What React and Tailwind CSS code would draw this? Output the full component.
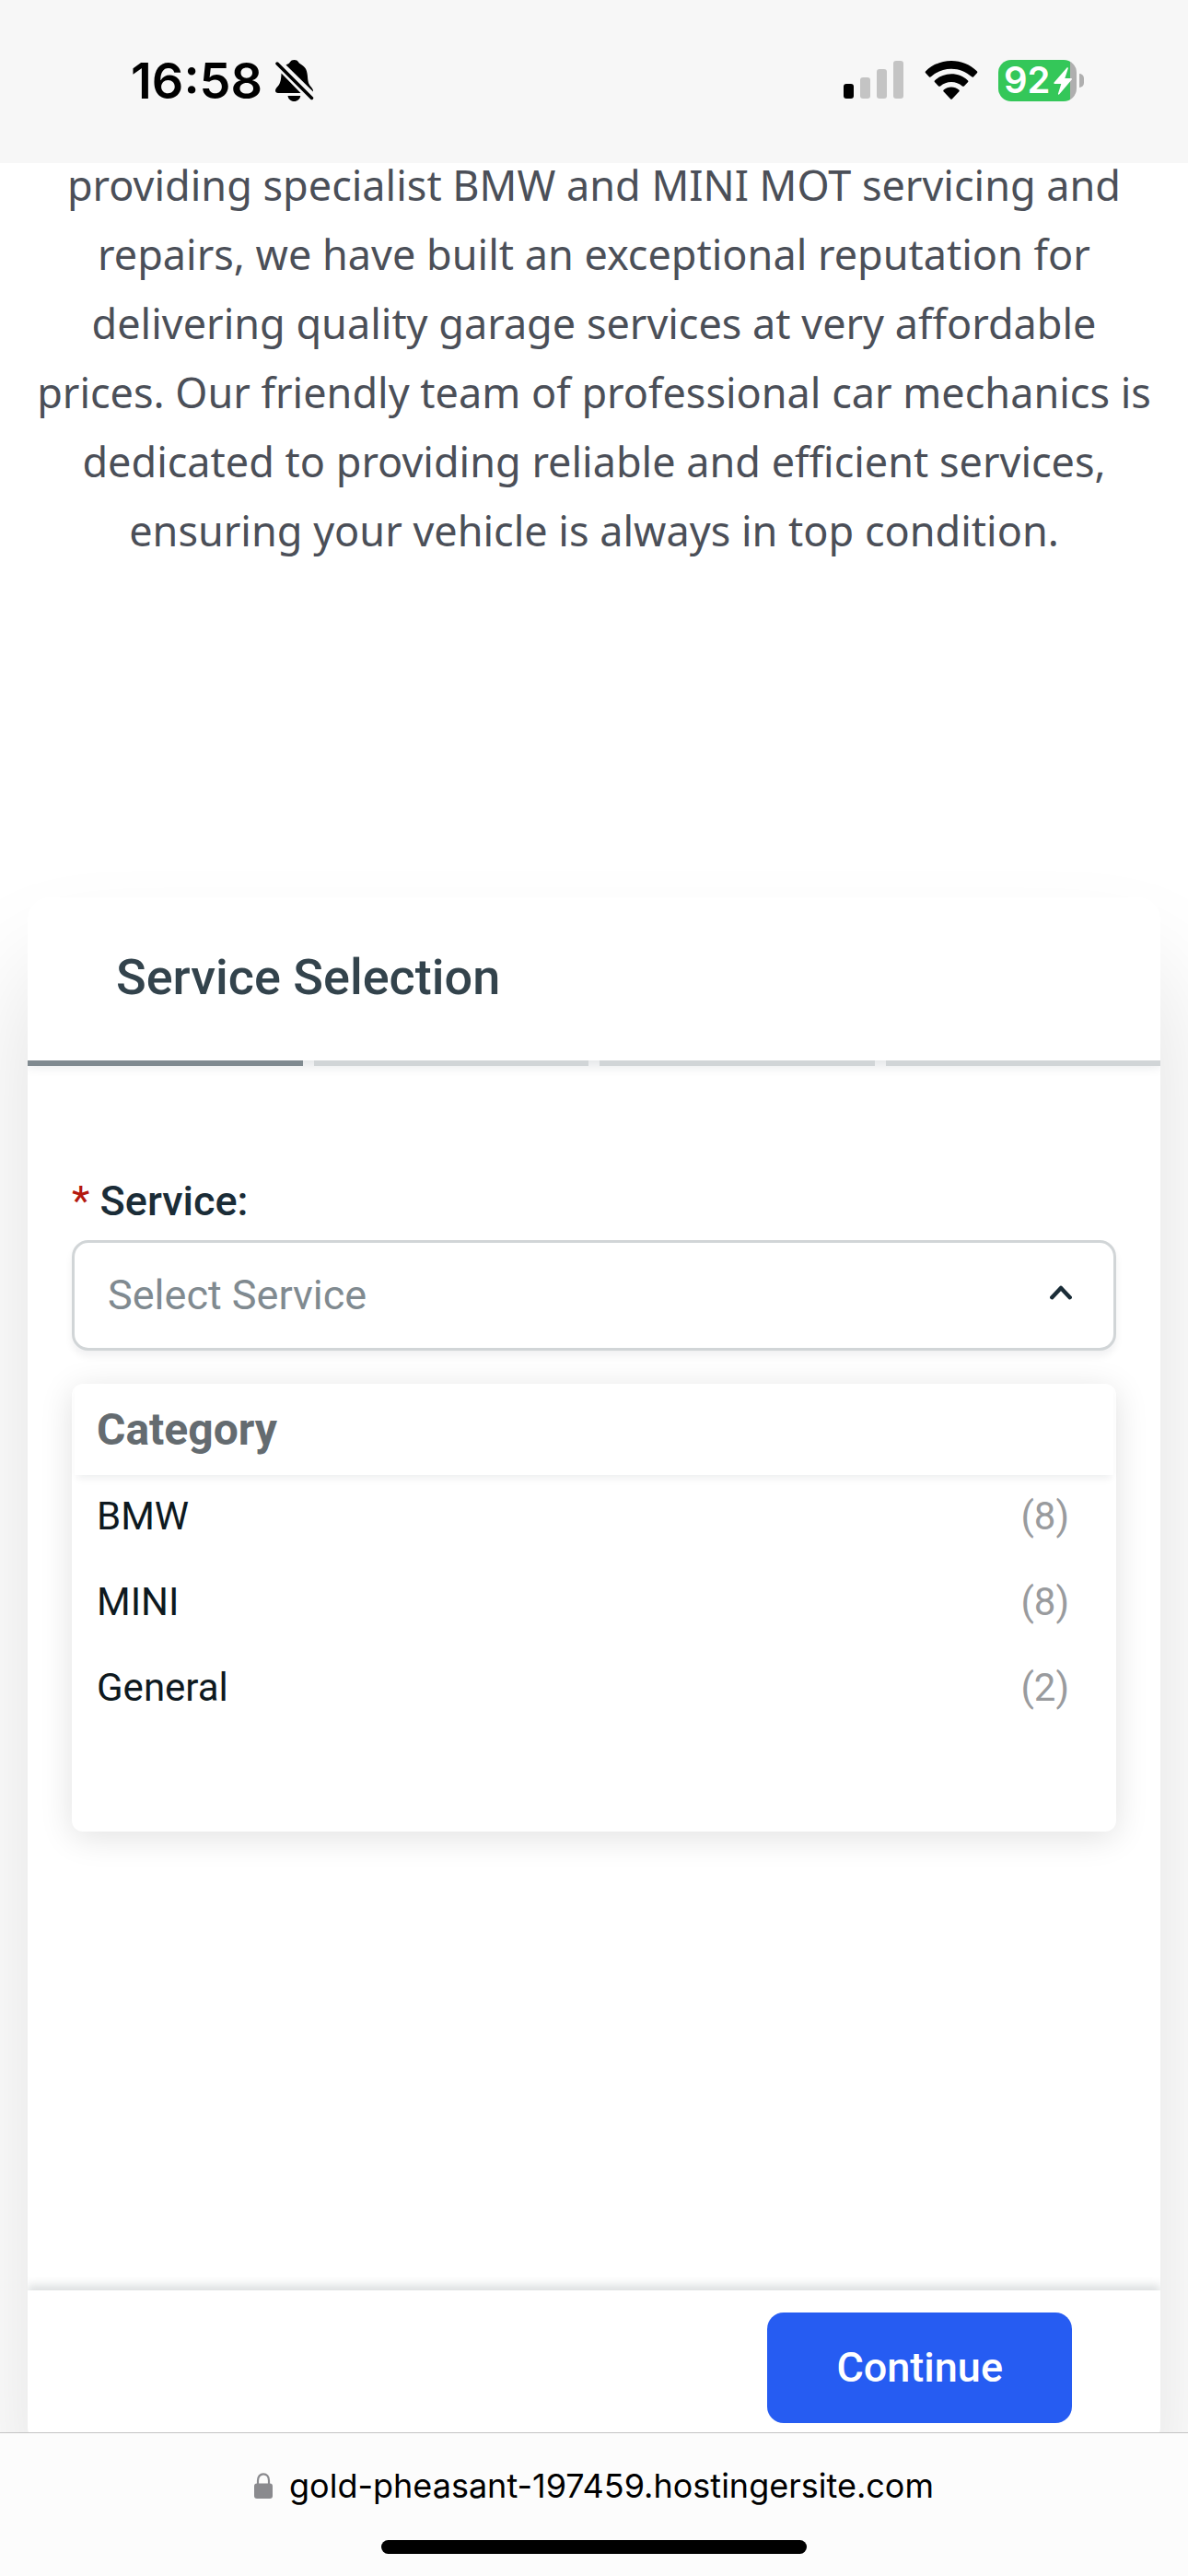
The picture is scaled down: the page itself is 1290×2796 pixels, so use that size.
import React, { useState } from "react";

const STEPS = ["service", "date", "details", "payment"];

const CATEGORIES = [
  { id: 1, name: "BMW", count: 8 },
  { id: 2, name: "MINI", count: 8 },
  { id: 3, name: "General", count: 2 },
];

function BellOffIcon() {
  return (
    <svg viewBox="0 0 42 46" className="h-[46px] w-[42px]" fill="none">
      <path
        fill="#000"
        d="M11.5 5.5C13.5 4.6 15 4 15.8 2.6C16.8 .8 18.4 0 20.5 0s3.7.8 4.7 2.6c.7 1.4 2 1.800 3.600 2.900C33.500 8.600 34.600 12.500 35 18c.3 5.500 1 8 3.500 11C40 30.700 41 32 41 34v.6zM6.500 14.500L27.500 36H3C1.200 36 0 35 0 33.500c0-2 1.200-3.200 2.800-5C5.800 25 6.200 20.500 6.500 14.500zM13.500 39h13.800c-.5 3.600-3.300 6-6.900 6s-6.400-2.400-6.900-6z"
      />
      <path d="M2 4l37.500 37.500" stroke="#000" strokeWidth="3.500" strokeLinecap="round" />
    </svg>
  );
}

function SignalIcon() {
  return (
    <svg viewBox="0 0 66 42" className="h-[42px] w-[66px]">
      <rect x="0" y="25" width="11" height="16" rx="3" fill="#000" />
      <rect x="18" y="18" width="11" height="23" rx="3" fill="#c4c4c4" />
      <rect x="36" y="9" width="11" height="32" rx="3" fill="#c4c4c4" />
      <rect x="54" y="0" width="11" height="41" rx="3" fill="#c4c4c4" />
    </svg>
  );
}

function WifiIcon() {
  return (
    <svg viewBox="0 0 58 42" className="h-[42px] w-[58px]" fill="#000">
      <path d="M29 0C40 0 49.500 4.200 56.800 11.200c.7.700.7 1.400.1 2.100l-3.700 3.900c-.7.700-1.400.7-2.100.1C45 11.800 37.500 8.700 29 8.700S13 11.800 6.900 17.300c-.7.600-1.400.6-2.100-.1L1.100 13.300c-.6-.7-.6-1.400.1-2.100C8.500 4.200 18 0 29 0z" />
      <path d="M29 14.300c7 0 13 2.600 17.800 6.900.8.700.8 1.400.1 2.100l-4 4.100c-.6.600-1.300.6-2 .1C37.600 24.700 33.500 23 29 23s-8.600 1.700-11.900 4.500c-.7.500-1.400.5-2-.1l-4-4.100c-.7-.7-.7-1.400.1-2.100C16 16.900 22 14.300 29 14.300z" />
      <path d="M29 28.500c3.100 0 5.900 1.100 8.200 2.900.7.600.7 1.300.1 2L30 41.200c-.7.700-1.300.7-2 0l-7.300-7.800c-.6-.7-.6-1.400.1-2C23.100 29.600 25.900 28.500 29 28.500z" />
    </svg>
  );
}

function Battery({ level }) {
  return (
    <div className="flex items-center gap-[3px]">
      <div className="relative flex h-[45px] w-[85px] items-center rounded-[14px] bg-[linear-gradient(90deg,#34c759_92%,#afafaf_92%)] pb-px pl-1.5">
        <span className="text-[40px] leading-[44px] font-semibold text-white">{level}</span>
        <svg viewBox="0 0 20 30" className="absolute top-2 right-[5px] h-[30px] w-5" fill="#fff">
          <path d="M14.500.600c.800-.900 1.700-.400 1.300.7L12.300 12H19c1 0 1.300.800.700 1.500L6.300 29.300c-.8.900-1.700.4-1.300-.7L8.300 18H1.300C.300 18 0 17.200.600 16.500z" />
        </svg>
      </div>
      <div className="h-[15px] w-[5px] rounded-r-full bg-[#afafaf]" />
    </div>
  );
}

function StatusBar() {
  return (
    <header className="relative z-10 flex h-[177px] shrink-0 items-start justify-between bg-[#f7f7f7] pt-[60px] pr-[113px] pl-[142px] font-['Inter',sans-serif]">
      <div className="flex h-14 items-center gap-[14px]">
        <span className="text-[54px] leading-[54px] font-semibold text-black">16:58</span>
        <BellOffIcon />
      </div>
      <div className="flex h-[54px] items-center gap-[22px]">
        <SignalIcon />
        <WifiIcon />
        <Battery level={92} />
      </div>
    </header>
  );
}

function ServiceForm() {
  const [service, setService] = useState("");

  return (
    <section className="mx-[30px] mt-[361px] overflow-hidden rounded-3xl bg-white font-['Roboto',sans-serif] shadow-[0_80px_120px_rgba(0,0,0,0.13)]">
      <h2 className="px-24 pt-[51px] pb-[54px] text-[54px] leading-[72px] font-medium text-[#33434c] shadow-[0_6px_12px_rgba(26,44,55,0.12)]">
        Service Selection
      </h2>
      <div className="grid grid-cols-4 gap-3">
        {STEPS.map((step, i) => (
          <div key={step} className={i === 0 ? "h-1.5 bg-[#808a90]" : "h-1.5 bg-[#d1d5d7]"} />
        ))}
      </div>

      <div className="px-12 pt-[117px] pb-[498px]">
        <label htmlFor="service" className="block text-[45px] leading-[60px] font-medium text-[#1a2c37]">
          <span className="font-normal text-[#b4190f]">*</span> Service:
        </label>
        <div className="relative mt-3">
          <select
            id="service"
            value={service}
            onChange={(e) => setService(e.target.value)}
            className="block h-[120px] w-full appearance-none rounded-[18px] border-3 border-[#d1d5d7] bg-white px-9 text-[45px] text-[#808a90] shadow-[0_6px_9px_rgba(14,25,32,0.06)]"
          >
            <option value="">Select Service</option>
            {CATEGORIES.map((c) => (
              <option key={c.id} value={c.name}>
                {c.name}
              </option>
            ))}
          </select>
          <svg
            viewBox="0 0 24 16"
            className="pointer-events-none absolute top-[49px] right-12 h-4 w-6"
            fill="none"
            stroke="#1a2c37"
            strokeWidth="4.500"
            strokeLinecap="round"
            strokeLinejoin="round"
          >
            <path d="M2.300 13.200L12 3l9.700 10.200" />
          </svg>
        </div>

        <div className="mt-9 rounded-xl bg-white pb-[108px] shadow-[0_6px_36px_rgba(0,0,0,0.12)]">
          <h3 className="mx-[3px] px-6 pt-5 pb-[19px] text-[48px] leading-[60px] font-bold text-[#646b70] shadow-[0_6px_9px_-3px_rgba(14,25,32,0.08)]">
            Category
          </h3>
          <ul>
            {CATEGORIES.map((c) => (
              <li key={c.id}>
                <button
                  type="button"
                  onClick={() => setService(c.name)}
                  className="flex h-[93px] w-full items-center justify-between pr-[51px] pb-1 pl-[27px] text-[42px] leading-[60px] text-[#0e1920]"
                >
                  <span>{c.name}</span>
                  <span className="text-[#999b9e]">({c.count})</span>
                </button>
              </li>
            ))}
          </ul>
        </div>
      </div>

      <div className="flex justify-end bg-white px-24 pt-6 pb-7 shadow-[0_-6px_9px_rgba(26,44,55,0.15)]">
        <button
          type="button"
          className="h-[120px] rounded-[18px] bg-[#265cf2] px-[75px] text-[45px] leading-[60px] font-medium text-white"
        >
          Continue
        </button>
      </div>
    </section>
  );
}

function AddressBar() {
  return (
    <footer className="relative z-10 flex h-[156px] shrink-0 flex-col items-center justify-between border-t border-[#c4c4c4] bg-[#fcfcfc] pt-[30px] pb-6 font-['Inter',sans-serif]">
      <a href="#" className="flex items-center gap-[18px] text-[36px] leading-[54px] text-black">
        <svg viewBox="0 0 20 28" className="h-7 w-5">
          <path d="M4 13V8.500C4 4.300 6.500 1.300 10 1.300s6 3 6 7.200V13" fill="none" stroke="#8a8a8e" strokeWidth="2.200" />
          <rect y="11.500" width="20" height="16.500" rx="3" fill="#8a8a8e" />
        </svg>
        gold-pheasant-197459.hostingersite.com
      </a>
      <div className="h-[15px] w-[462px] rounded-full bg-black" />
    </footer>
  );
}

export default function App() {
  return (
    <div className="flex h-screen flex-col overflow-hidden bg-white">
      <StatusBar />
      {/* the page is scrolled, so the first line starts under the status bar */}
      <main className="-mt-[14px] min-h-0 flex-1 overflow-hidden">
        <p className="px-[30px] text-center font-['Noto_Sans',sans-serif] text-[45px] leading-[75px] text-[#4b4f58]">
          providing specialist BMW and MINI MOT servicing and repairs, we have built an exceptional
          reputation for delivering quality garage services at very affordable prices. Our friendly
          team of professional car mechanics is dedicated to providing reliable and efficient
          services, ensuring your vehicle is always in top condition.
        </p>
        <ServiceForm />
      </main>
      <AddressBar />
    </div>
  );
}
